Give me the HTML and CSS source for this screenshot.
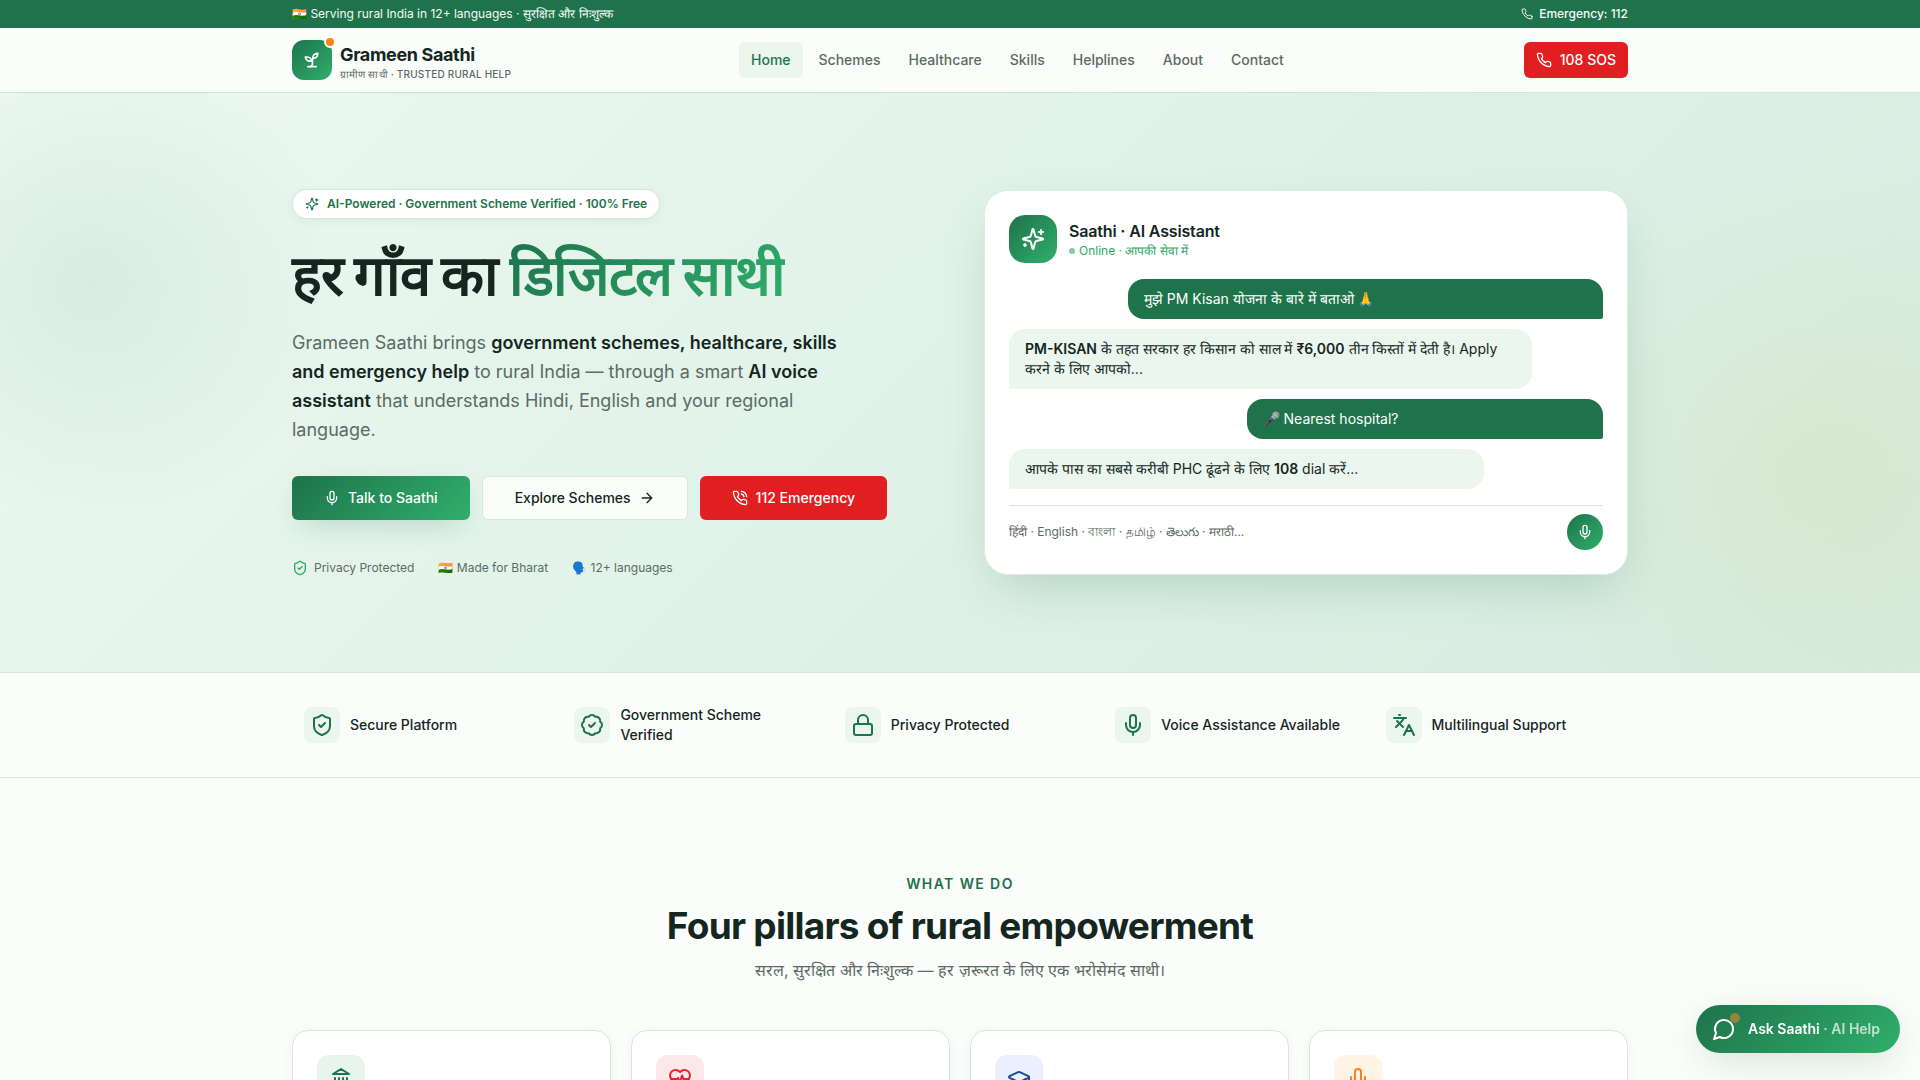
FILE: index.html
```html
<!DOCTYPE html>
<html lang="en">
<head>
  <meta charset="UTF-8">
  <meta name="viewport" content="width=device-width, initial-scale=1.0">
  <title>Grameen Saathi</title>
  <link rel="stylesheet" href="styles.css">
</head>
<body>
  <!-- Icon set -->
  <svg class="icon-defs" aria-hidden="true">
    <symbol id="i-phone" viewBox="0 0 24 24"><path d="M22 16.92v3a2 2 0 0 1-2.18 2 19.79 19.79 0 0 1-8.63-3.07 19.5 19.5 0 0 1-6-6 19.79 19.79 0 0 1-3.07-8.67A2 2 0 0 1 4.11 2h3a2 2 0 0 1 2 1.72 12.84 12.84 0 0 0 .7 2.81 2 2 0 0 1-.45 2.11L8.09 9.91a16 16 0 0 0 6 6l1.27-1.27a2 2 0 0 1 2.11-.45 12.84 12.84 0 0 0 2.81.7A2 2 0 0 1 22 16.92z"/></symbol>
    <symbol id="i-phone-call" viewBox="0 0 24 24"><path d="M22 16.92v3a2 2 0 0 1-2.18 2 19.79 19.79 0 0 1-8.63-3.07 19.5 19.5 0 0 1-6-6 19.79 19.79 0 0 1-3.07-8.67A2 2 0 0 1 4.11 2h3a2 2 0 0 1 2 1.72 12.84 12.84 0 0 0 .7 2.81 2 2 0 0 1-.45 2.11L8.09 9.91a16 16 0 0 0 6 6l1.27-1.27a2 2 0 0 1 2.11-.45 12.84 12.84 0 0 0 2.81.7A2 2 0 0 1 22 16.92z"/><path d="M14.05 2a9 9 0 0 1 8 7.94"/><path d="M14.05 6A5 5 0 0 1 18 10"/></symbol>
    <symbol id="i-sprout" viewBox="0 0 24 24"><path d="M7 20h10"/><path d="M10 20c5.5-2.5.8-6.4 3-10"/><path d="M9.5 9.4c1.1.8 1.8 2.2 2.3 3.7-2 .4-3.5.4-4.8-.3-1.2-.6-2.3-1.9-3-4.2 2.8-.5 4.4 0 5.5.8z"/><path d="M14.1 6a7 7 0 0 0-1.1 4c1.9-.1 3.3-.6 4.3-1.4 1-1 1.6-2.3 1.7-4.6-2.7.1-4 1-4.9 2z"/></symbol>
    <symbol id="i-sparkles" viewBox="0 0 24 24"><path d="M9.937 15.5A2 2 0 0 0 8.5 14.063l-6.135-1.582a.5.5 0 0 1 0-.962L8.5 9.936A2 2 0 0 0 9.937 8.5l1.582-6.135a.5.5 0 0 1 .963 0L14.063 8.5A2 2 0 0 0 15.5 9.937l6.135 1.581a.5.5 0 0 1 0 .964L15.5 14.063a2 2 0 0 0-1.437 1.437l-1.582 6.135a.5.5 0 0 1-.963 0z"/><path d="M20 3v4"/><path d="M22 5h-4"/><path d="M4 17v2"/><path d="M5 18H3"/></symbol>
    <symbol id="i-mic" viewBox="0 0 24 24"><path d="M12 2a3 3 0 0 0-3 3v7a3 3 0 0 0 6 0V5a3 3 0 0 0-3-3Z"/><path d="M19 10v2a7 7 0 0 1-14 0v-2"/><path d="M12 19v3"/></symbol>
    <symbol id="i-arrow" viewBox="0 0 24 24"><path d="M5 12h14"/><path d="m12 5 7 7-7 7"/></symbol>
    <symbol id="i-shield" viewBox="0 0 24 24"><path d="M20 13c0 5-3.5 7.5-7.66 8.95a1 1 0 0 1-.67-.01C7.5 20.5 4 18 4 13V6a1 1 0 0 1 1-1c2 0 4.5-1.2 6.24-2.72a1.17 1.17 0 0 1 1.52 0C14.51 3.81 17 5 19 5a1 1 0 0 1 1 1z"/><path d="m9 12 2 2 4-4"/></symbol>
    <symbol id="i-badge" viewBox="0 0 24 24"><path d="M3.85 8.62a4 4 0 0 1 4.78-4.77 4 4 0 0 1 6.74 0 4 4 0 0 1 4.78 4.78 4 4 0 0 1 0 6.74 4 4 0 0 1-4.77 4.78 4 4 0 0 1-6.75 0 4 4 0 0 1-4.78-4.77 4 4 0 0 1 0-6.76Z"/><path d="m9 12 2 2 4-4"/></symbol>
    <symbol id="i-lock" viewBox="0 0 24 24"><rect width="18" height="11" x="3" y="11" rx="2"/><path d="M7 11V7a5 5 0 0 1 10 0v4"/></symbol>
    <symbol id="i-languages" viewBox="0 0 24 24"><path d="m5 8 6 6"/><path d="m4 14 6-6 2-3"/><path d="M2 5h12"/><path d="M7 2h1"/><path d="m22 22-5-10-5 10"/><path d="M14 18h6"/></symbol>
    <symbol id="i-landmark" viewBox="0 0 24 24"><path d="M3 22h18"/><path d="M6 18v-7"/><path d="M10 18v-7"/><path d="M14 18v-7"/><path d="M18 18v-7"/><path d="m12 2 8 5H4z"/></symbol>
    <symbol id="i-heart" viewBox="0 0 24 24"><path d="M19 14c1.49-1.46 3-3.21 3-5.5A5.5 5.5 0 0 0 16.500 3c-1.76 0-3 .5-4.5 2-1.5-1.5-2.740-2-4.5-2A5.5 5.5 0 0 0 2 8.500c0 2.300 1.500 4.050 3 5.500l7 7Z"/><path d="M3.220 12H9.500l.5-1 2 4.500 2-7 1.500 3.500h5.270"/></symbol>
    <symbol id="i-cap" viewBox="0 0 24 24"><path d="M21.420 10.922a1 1 0 0 0-.019-1.838L12.830 5.180a2 2 0 0 0-1.660 0L2.600 9.080a1 1 0 0 0 0 1.832l8.570 3.908a2 2 0 0 0 1.660 0z"/><path d="M22 10v6"/><path d="M6 12.500V16a6 3 0 0 0 12 0v-3.500"/></symbol>
    <symbol id="i-chat" viewBox="0 0 24 24"><path d="M7.9 20A9 9 0 1 0 4 16.100L2 22Z"/></symbol>
  </svg>

  <div class="topbar">
    <div class="container topbar-inner">
      <span>🇮🇳 Serving rural India in 12+ languages · सुरक्षित और निःशुल्क</span>
      <a href="tel:112"><svg class="icon icon-xs"><use href="#i-phone"/></svg>Emergency: 112</a>
    </div>
  </div>

  <header class="header">
    <div class="container header-inner">
      <a class="brand" href="#">
        <span class="brand-mark"><svg class="icon icon-md"><use href="#i-sprout"/></svg><span class="brand-dot"></span></span>
        <span class="brand-text">
          <span class="brand-name">Grameen Saathi</span>
          <span class="brand-tag">ग्रामीण साथी · Trusted Rural Help</span>
        </span>
      </a>
      <nav class="nav">
        <a class="active" href="#">Home</a>
        <a href="#">Schemes</a>
        <a href="#">Healthcare</a>
        <a href="#">Skills</a>
        <a href="#">Helplines</a>
        <a href="#">About</a>
        <a href="#">Contact</a>
      </nav>
      <a class="btn btn-red btn-sm" href="tel:108"><svg class="icon"><use href="#i-phone"/></svg>108 SOS</a>
    </div>
  </header>

  <main>
    <section class="hero">
      <div class="container hero-grid">
        <div class="hero-copy">
          <span class="pill"><svg class="icon icon-sm"><use href="#i-sparkles"/></svg>AI-Powered · Government Scheme Verified · 100% Free</span>
          <h1>हर गाँव का <span>डिजिटल साथी</span></h1>
          <p class="lead">Grameen Saathi brings <strong>government schemes, healthcare, skills and emergency help</strong> to rural India — through a smart <strong>AI voice assistant</strong> that understands Hindi, English and your regional language.</p>
          <div class="actions">
            <button class="btn btn-green" type="button"><svg class="icon"><use href="#i-mic"/></svg>Talk to Saathi</button>
            <a class="btn btn-outline" href="#">Explore Schemes<svg class="icon"><use href="#i-arrow"/></svg></a>
            <a class="btn btn-red" href="tel:112"><svg class="icon"><use href="#i-phone-call"/></svg>112 Emergency</a>
          </div>
          <div class="notes">
            <span class="note"><svg class="icon"><use href="#i-shield"/></svg>Privacy Protected</span>
            <span>🇮🇳 Made for Bharat</span>
            <span>🗣️ 12+ languages</span>
          </div>
        </div>

        <div class="chat">
          <div class="chat-head">
            <span class="chat-avatar"><svg class="icon icon-lg"><use href="#i-sparkles"/></svg></span>
            <div>
              <h3>Saathi · AI Assistant</h3>
              <p class="status"><span class="status-dot"></span>Online · आपकी सेवा में</p>
            </div>
          </div>
          <div class="messages">
            <p class="msg msg-user w-80">मुझे PM Kisan योजना के बारे में बताओ 🙏</p>
            <p class="msg msg-bot w-88"><strong>PM-KISAN</strong> के तहत सरकार हर किसान को साल में <strong>₹6,000</strong> तीन किस्तों में देती है। Apply करने के लिए आपको...</p>
            <p class="msg msg-user w-60">🎤 Nearest hospital?</p>
            <p class="msg msg-bot w-80">आपके पास का सबसे करीबी PHC ढूंढने के लिए <strong>108</strong> dial करें...</p>
          </div>
          <div class="chat-foot">
            <span>हिंदी · English · বাংলা · தமிழ் · తెలుగు · मराठी...</span>
            <button class="mic-btn" type="button" aria-label="Speak"><svg class="icon"><use href="#i-mic"/></svg></button>
          </div>
        </div>
      </div>
    </section>

    <section class="trust">
      <ul class="container trust-list">
        <li><span class="trust-icon"><svg class="icon icon-lg"><use href="#i-shield"/></svg></span>Secure Platform</li>
        <li><span class="trust-icon"><svg class="icon icon-lg"><use href="#i-badge"/></svg></span>Government Scheme Verified</li>
        <li><span class="trust-icon"><svg class="icon icon-lg"><use href="#i-lock"/></svg></span>Privacy Protected</li>
        <li><span class="trust-icon"><svg class="icon icon-lg"><use href="#i-mic"/></svg></span>Voice Assistance Available</li>
        <li><span class="trust-icon"><svg class="icon icon-lg"><use href="#i-languages"/></svg></span>Multilingual Support</li>
      </ul>
    </section>

    <section class="pillars">
      <div class="container">
        <p class="eyebrow">What we do</p>
        <h2>Four pillars of rural empowerment</h2>
        <p class="sub">सरल, सुरक्षित और निःशुल्क — हर ज़रूरत के लिए एक भरोसेमंद साथी।</p>
        <div class="cards">
          <article class="card"><span class="card-icon green"><svg class="icon icon-lg"><use href="#i-landmark"/></svg></span></article>
          <article class="card"><span class="card-icon red"><svg class="icon icon-lg"><use href="#i-heart"/></svg></span></article>
          <article class="card"><span class="card-icon blue"><svg class="icon icon-lg"><use href="#i-cap"/></svg></span></article>
          <article class="card"><span class="card-icon orange"><svg class="icon icon-lg"><use href="#i-mic"/></svg></span></article>
        </div>
      </div>
    </section>
  </main>

  <button class="fab" type="button">
    <span class="fab-icon"><svg class="icon icon-lg"><use href="#i-chat"/></svg><span class="fab-dot"></span></span>
    <span>Ask Saathi <span class="fab-soft">· AI Help</span></span>
  </button>
</body>
</html>
```
FILE: styles.css
```css
:root {
  --green: #1e734b;
  --green-light: #30af6b;
  --mint: #eaf6ee;
  --ink: #14261f;
  --muted: #5b6b65;
  --line: #dbe5df;
  --bg: #fbfdfa;
  --red: #e11f20;
  --gradient: linear-gradient(135deg, var(--green), var(--green-light));
}
* {
  box-sizing: border-box;
}
body {
  margin: 0;
  height: 100vh;
  overflow: hidden;
  font-family: Inter, sans-serif;
  font-size: 14px;
  line-height: 20px;
  color: var(--ink);
  background: var(--bg);
}
h1, h2, h3, p, ul {
  margin: 0;
  padding: 0;
}
a {
  color: inherit;
  text-decoration: none;
}
button {
  font: inherit;
  border: none;
  cursor: pointer;
}
strong {
  font-weight: 600;
}
.container {
  max-width: 1400px;
  margin: 0 auto;
  padding: 0 32px;
}

/* Icons */
.icon-defs {
  display: none;
}
.icon {
  width: 16px;
  height: 16px;
  flex-shrink: 0;
  fill: none;
  stroke: currentColor;
  stroke-width: 2;
  stroke-linecap: round;
  stroke-linejoin: round;
}
.icon-xs {
  width: 12px;
  height: 12px;
}
.icon-sm {
  width: 14px;
  height: 14px;
}
.icon-md {
  width: 20px;
  height: 20px;
}
.icon-lg {
  width: 24px;
  height: 24px;
}

/* Top bar */
.topbar {
  background: var(--green);
  color: #f5faf6;
  font-size: 12px;
  line-height: 16px;
}
.topbar-inner {
  display: flex;
  justify-content: space-between;
  padding-top: 6px;
  padding-bottom: 6px;
}
.topbar a {
  display: flex;
  align-items: center;
  gap: 6px;
  font-weight: 500;
}

/* Header */
.header {
  border-bottom: 1px solid #d3e5db;
}
.header-inner {
  display: flex;
  align-items: center;
  justify-content: space-between;
  height: 64px;
}
.brand {
  display: flex;
  align-items: center;
  gap: 8px;
}
.brand-mark {
  position: relative;
  display: grid;
  place-items: center;
  width: 40px;
  height: 40px;
  border-radius: 12px;
  background: var(--gradient);
  color: #fff;
}
.brand-dot {
  position: absolute;
  top: -4px;
  right: -4px;
  width: 12px;
  height: 12px;
  border: 2px solid var(--bg);
  border-radius: 50%;
  background: #fb8418;
}
.brand-text {
  display: flex;
  flex-direction: column;
  padding-top: 6px;
}
.brand-name {
  font-size: 18px;
  line-height: 22px;
  font-weight: 700;
  letter-spacing: -0.02em;
}
.brand-tag {
  font-size: 10px;
  line-height: 16px;
  font-weight: 500;
  letter-spacing: 0.02em;
  text-transform: uppercase;
  color: var(--muted);
}
.nav {
  display: flex;
  gap: 4px;
}
.nav a {
  padding: 8px 12px;
  border-radius: 6px;
  font-weight: 500;
  color: var(--muted);
}
.nav a.active {
  background: var(--mint);
  color: var(--green);
}

/* Buttons */
.btn {
  display: inline-flex;
  align-items: center;
  justify-content: center;
  gap: 8px;
  height: 44px;
  padding: 0 32px;
  border-radius: 6px;
  font-weight: 500;
}
.btn-sm {
  height: 36px;
  padding: 0 12px;
}
.btn-red {
  background: var(--red);
  color: #fff;
}
.btn-green {
  background: var(--gradient);
  color: #fff;
  box-shadow: 0 10px 30px -10px rgba(30, 115, 75, 0.3);
}
.btn-outline {
  border: 1px solid var(--line);
  background: var(--bg);
}

/* Hero */
.hero {
  padding: 96px 0;
  background:
    radial-gradient(ellipse 250px 240px at 90px 190px, rgba(30, 115, 95, 0.08), rgba(30, 115, 95, 0) 100%),
    radial-gradient(ellipse 320px 300px at calc(100% - 90px) 380px, rgba(200, 180, 50, 0.1), rgba(200, 180, 50, 0) 100%),
    linear-gradient(135deg, #ebf8f1, #d6ecdf);
}
.hero-grid {
  display: grid;
  grid-template-columns: 1fr 1fr;
  gap: 48px;
  align-items: center;
}
.pill {
  display: inline-flex;
  align-items: center;
  gap: 8px;
  padding: 6px 12px;
  border: 1px solid var(--line);
  border-radius: 15px;
  background: #fff;
  box-shadow: 0 2px 8px rgba(20, 60, 40, 0.06);
  color: var(--green);
  font-size: 12px;
  line-height: 16px;
  font-weight: 600;
}
h1 {
  margin: 24px 0 20px;
  font-size: 56px;
  line-height: 65px;
  font-weight: 800;
  letter-spacing: -0.02em;
}
h1 span {
  padding: 8px 0;
  background: var(--gradient);
  background-clip: text;
  -webkit-background-clip: text;
  color: transparent;
}
.lead {
  max-width: 576px;
  margin-bottom: 32px;
  font-size: 18px;
  line-height: 29px;
  color: var(--muted);
}
.lead strong {
  color: var(--ink);
}
.actions {
  display: flex;
  gap: 12px;
}
.notes {
  display: flex;
  gap: 24px;
  margin-top: 40px;
  font-size: 12px;
  line-height: 16px;
  color: var(--muted);
}
.note {
  display: flex;
  gap: 6px;
}
.note .icon {
  color: #2fa866;
}

/* Chat preview */
.chat {
  padding: 24px;
  border: 1px solid #e1ebe5;
  border-radius: 24px;
  background: #fff;
  box-shadow: 0 20px 50px -12px rgba(30, 115, 75, 0.25);
}
.chat-head {
  display: flex;
  align-items: center;
  gap: 12px;
}
.chat-avatar {
  display: grid;
  place-items: center;
  width: 48px;
  height: 48px;
  border-radius: 16px;
  background: var(--gradient);
  color: #fff;
}
h3 {
  font-size: 16px;
  line-height: 24px;
  font-weight: 600;
  letter-spacing: -0.01em;
}
.status {
  display: flex;
  align-items: center;
  gap: 4px;
  font-size: 12px;
  line-height: 16px;
  color: #2fa866;
}
.status-dot {
  width: 6px;
  height: 6px;
  border-radius: 50%;
  background: #82cda3;
}
.messages {
  display: flex;
  flex-direction: column;
  gap: 10px;
  margin: 16px 0;
}
.msg {
  padding: 10px 16px;
  border-radius: 16px;
}
.msg-user {
  align-self: flex-end;
  border-bottom-right-radius: 2px;
  background: var(--green);
  color: #fff;
}
.msg-bot {
  border-bottom-left-radius: 2px;
  background: var(--mint);
}
.w-60 {
  width: 60%;
}
.w-80 {
  width: 80%;
}
.w-88 {
  width: 88%;
}
.chat-foot {
  display: flex;
  align-items: center;
  justify-content: space-between;
  padding-top: 8px;
  border-top: 1px solid var(--line);
  font-size: 12px;
  line-height: 16px;
  color: var(--muted);
}
.mic-btn {
  display: grid;
  place-items: center;
  width: 36px;
  height: 36px;
  padding: 0;
  border-radius: 50%;
  background: var(--gradient);
  color: #fff;
}

/* Trust strip */
.trust {
  border-top: 1px solid var(--line);
  border-bottom: 1px solid var(--line);
}
.trust-list {
  display: grid;
  grid-template-columns: repeat(5, 1fr);
  gap: 16px;
  padding-top: 32px;
  padding-bottom: 32px;
  list-style: none;
}
.trust li {
  display: flex;
  align-items: center;
  gap: 10px;
  padding: 0 12px;
  font-weight: 500;
}
.trust-icon {
  display: grid;
  place-items: center;
  flex-shrink: 0;
  width: 36px;
  height: 36px;
  border-radius: 8px;
  background: var(--mint);
  color: var(--green);
}

/* Pillars */
.pillars {
  padding: 96px 0;
  text-align: center;
}
.eyebrow {
  font-weight: 600;
  letter-spacing: 0.1em;
  text-transform: uppercase;
  color: var(--green);
}
h2 {
  margin: 12px 0;
  font-size: 37px;
  line-height: 40px;
  font-weight: 700;
  letter-spacing: -0.02em;
}
.sub {
  font-size: 16px;
  line-height: 24px;
  color: var(--muted);
}
.cards {
  display: grid;
  grid-template-columns: repeat(4, 1fr);
  gap: 20px;
  margin-top: 48px;
}
.card {
  padding: 24px;
  min-height: 240px;
  border: 1px solid var(--line);
  border-radius: 16px;
  background: #fff;
  box-shadow: 0 2px 12px rgba(20, 60, 40, 0.05);
}
.card-icon {
  display: grid;
  place-items: center;
  width: 48px;
  height: 48px;
  border-radius: 12px;
}
.green {
  background: #e8f5ed;
  color: var(--green);
}
.red {
  background: #fde8e9;
  color: #dc2830;
}
.blue {
  background: #eaf0fd;
  color: #1f4a94;
}
.orange {
  background: #fff2e6;
  color: #f58220;
}

/* Floating assistant button */
.fab {
  position: fixed;
  right: 20px;
  bottom: 27px;
  display: flex;
  align-items: center;
  gap: 12px;
  height: 48px;
  padding: 0 20px 0 16px;
  border-radius: 24px;
  background: var(--gradient);
  box-shadow: 0 10px 40px -8px rgba(30, 115, 75, 0.25);
  color: #fff;
  font-weight: 600;
}
.fab-icon {
  position: relative;
  display: flex;
}
.fab-dot {
  position: absolute;
  top: -4px;
  right: -4px;
  width: 10px;
  height: 10px;
  border-radius: 50%;
  background: #93853c;
}
.fab-soft {
  opacity: 0.7;
}
```
